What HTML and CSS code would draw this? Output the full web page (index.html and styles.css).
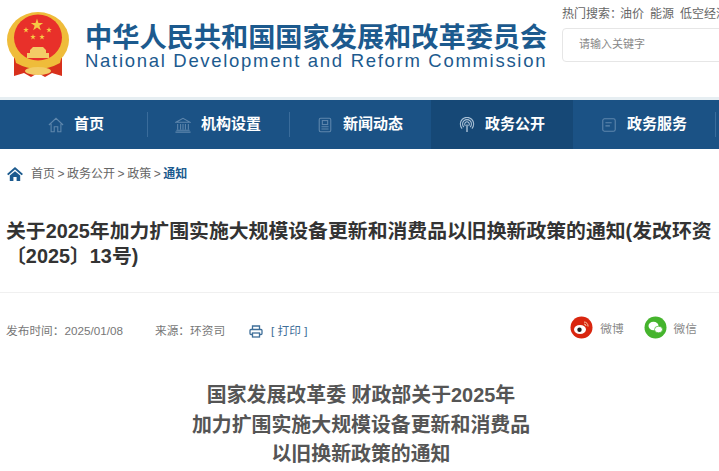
FILE: index.html

```html
<!DOCTYPE html>
<html lang="zh-CN">
<head>
    <meta charset="UTF-8">
    <title>关于2025年加力扩围实施大规模设备更新和消费品以旧换新政策的通知</title>
    <link rel="stylesheet" href="styles.css">
</head>
<body>
    <header class="top">
        <div class="brand">
            <svg class="emblem" width="64" height="68" viewBox="0 0 64 68">
                <defs>
                    <polygon id="star" points="0,-1 .225,-.31 .95,-.31 .36,.12 .59,.81 0,.38 -.59,.81 -.36,.12 -.95,-.31 -.225,-.31" fill="#f6c944"/>
                </defs>
                <path d="M8 46 L8 65 L18 62 L25 66 L32 62 L39 66 L46 62 L56 65 L56 46 Z" fill="#d8301c"/>
                <ellipse cx="32" cy="29" rx="31" ry="28" fill="#efbc3a"/>
                <ellipse cx="32" cy="26.5" rx="24" ry="23" fill="#e8302a"/>
                <use href="#star" transform="translate(31 14) scale(6.5)"/>
                <use href="#star" transform="translate(20 19) scale(3)"/>
                <use href="#star" transform="translate(43 19) scale(3)"/>
                <use href="#star" transform="translate(27 26) scale(3)"/>
                <use href="#star" transform="translate(36 26) scale(3)"/>
                <path d="M21 47 V42 H24 V39 L27 36 H37 L40 39 V42 H43 V47 Z" fill="#f3cc66"/>
                <path d="M8 44 Q32 58 56 44 L54 52 Q32 64 10 52 Z" fill="#efbc3a"/>
                <ellipse cx="32" cy="60" rx="13" ry="4" fill="#f3cc66"/>
            </svg>
            <div class="brand-text">
                <div class="brand-cn">中华人民共和国国家发展和改革委员会</div>
                <div class="brand-en">National Development and Reform Commission</div>
            </div>
        </div>
        <div class="search">
            <div class="hot">
                <span>热门搜索：</span><span>油价</span><span>能源</span><span>低空经济</span>
            </div>
            <div class="search-box">请输入关键字</div>
        </div>
    </header>

    <nav class="nav">
        <a class="nav-item" href="#">
            <svg class="nav-icon" viewBox="0 0 18 18" fill="none" stroke="#5f87ad" stroke-width="1.2"><path d="M1 9 L9 1.5 L17 9 M3.5 7.5 V16.5 H7 V11 H11 V16.5 H14.5 V7.5"/></svg>
            <span class="nav-text">首页</span>
        </a>
        <a class="nav-item" href="#">
            <svg class="nav-icon" viewBox="0 0 18 18" fill="none" stroke="#5f87ad" stroke-width="1.2"><path d="M1 6 L9 1.5 L17 6 Z M3 8 V14 M6.3 8 V14 M9 8 V14 M11.7 8 V14 M15 8 V14 M1.5 15 H16.5 M.5 17 H17.5"/></svg>
            <span class="nav-text">机构设置</span>
        </a>
        <a class="nav-item" href="#">
            <svg class="nav-icon" viewBox="0 0 18 18" fill="none" stroke="#5f87ad" stroke-width="1.2"><rect x="2.5" y="1.5" width="13" height="15" rx="1.5"/><rect x="6" y="4" width="6" height="4.5"/><path d="M5 11 H13 M5 13.5 H13"/></svg>
            <span class="nav-text">新闻动态</span>
        </a>
        <a class="nav-item active" href="#">
            <svg class="nav-icon" viewBox="0 0 18 18" fill="none" stroke="#a9c0d6" stroke-width="1.2"><path d="M3.5 13 A7.5 7.5 0 1 1 14.5 13 M5.5 11.5 A5 5 0 1 1 12.5 11.5 M7.3 10 A2.6 2.6 0 1 1 10.7 10"/><path d="M9 8.5 V17" stroke-width="1.6"/></svg>
            <span class="nav-text">政务公开</span>
        </a>
        <a class="nav-item" href="#">
            <svg class="nav-icon" viewBox="0 0 18 18" fill="none" stroke="#5f87ad" stroke-width="1.2"><rect x="2" y="2" width="14" height="14" rx="2"/><path d="M5 6.5 H12 M5 10 H10"/></svg>
            <span class="nav-text">政务服务</span>
        </a>
    </nav>

    <div class="crumbs">
        <svg class="crumb-home" width="16" height="14" viewBox="0 0 16 14"><path d="M8 0 L16 7 L14.6 8.2 L8 2.6 L1.4 8.2 L0 7 Z M2.8 8.6 L8 4.2 L13.2 8.6 V14 H9.6 V10 H6.4 V14 H2.8 Z" fill="#1c5a8e"/></svg>
        <span class="crumb-text">首页 &gt; 政务公开 &gt; 政策 &gt; <b>通知</b></span>
    </div>

    <h1 class="title">关于2025年加力扩围实施大规模设备更新和消费品以旧换新政策的通知(发改环资〔2025〕13号)</h1>

    <div class="meta">
        <div class="meta-left">
            <span class="date">发布时间：2025/01/08</span>
            <span class="source">来源：环资司</span>
            <span class="print">
                <svg class="print-icon" width="14" height="13" viewBox="0 0 14 13" fill="none" stroke="#3f6f99" stroke-width="1.3"><path d="M3.5 4.5 V1 H10.5 V4.5"/><rect x="1" y="4.5" width="12" height="5" rx="1"/><rect x="3.5" y="8" width="7" height="4" fill="#fff"/></svg>
                [ 打印 ]
            </span>
        </div>
        <div class="share">
            <span class="share-item">
                <svg width="23" height="23" viewBox="0 0 23 23"><circle cx="11.5" cy="11.5" r="11" fill="#d9260f"/><ellipse cx="10" cy="13.5" rx="6" ry="4.5" fill="#fff"/><circle cx="9.5" cy="13.8" r="2.2" fill="#222"/><path d="M14 6 A4 4 0 0 1 18 10.5 M14 8 A2 2 0 0 1 16 10" fill="none" stroke="#f7c9a8" stroke-width="1"/></svg>
                微博
            </span>
            <span class="share-item">
                <svg width="23" height="23" viewBox="0 0 23 23"><circle cx="11.5" cy="11.5" r="11" fill="#45b42d"/><ellipse cx="9.5" cy="10" rx="5" ry="4.2" fill="#fff"/><ellipse cx="14.5" cy="13.5" rx="4" ry="3.3" fill="#fff" stroke="#45b42d" stroke-width=".7"/></svg>
                微信
            </span>
        </div>
    </div>

    <h2 class="doc-title">国家发展改革委 财政部关于2025年<br>加力扩围实施大规模设备更新和消费品<br>以旧换新政策的通知</h2>
</body>
</html>
```

FILE: styles.css

```css
html, body {
    height: 471px;
    overflow: hidden;
}
body {
    margin: 0;
    font-family: "Liberation Sans", "Noto Sans CJK SC", sans-serif;
    color: #666;
    background: #fff;
}
.top {
    display: flex;
    justify-content: space-between;
    height: 97px;
    border-bottom: 3px solid #e6eef2;
}
.brand {
    display: flex;
    padding: 11px 0 0 6px;
}
.emblem {
    flex-shrink: 0;
}
.brand-text {
    margin-left: 15px;
    padding-top: 12px;
}
.brand-cn {
    font-size: 27.2px;
    line-height: 29px;
    font-weight: bold;
    color: #1c5a8e;
    white-space: nowrap;
}
.brand-en {
    font-size: 18.5px;
    line-height: 18px;
    letter-spacing: 1.7px;
    color: #1c5a8e;
    white-space: nowrap;
}
.search {
    width: 157px;
    flex-shrink: 0;
    padding-top: 7px;
    overflow: hidden;
}
.hot {
    font-size: 12px;
    line-height: 15px;
    white-space: nowrap;
}
.hot span {
    margin-right: 6px;
}
.hot span:first-child {
    margin-right: -2px;
}
.search-box {
    margin-top: 6px;
    height: 32px;
    line-height: 30px;
    padding-left: 16px;
    width: 200px;
    border: 1px solid #e6e6e6;
    border-radius: 4px;
    font-size: 11px;
    color: #888;
}
.nav {
    display: flex;
    height: 49px;
    padding-left: 5px;
    background: #1b5285;
}
.nav-item {
    display: flex;
    align-items: center;
    justify-content: center;
    gap: 10px;
    width: 142px;
    color: #fff;
    font-size: 15px;
    font-weight: bold;
    text-decoration: none;
    position: relative;
}
.nav-item::after {
    content: "";
    position: absolute;
    right: -1px;
    top: 12px;
    height: 25px;
    width: 1px;
    background: #3a6c9b;
}
.nav-item.active {
    background: #164876;
}
.nav-item.active::after {
    display: none;
}
.nav-icon {
    width: 16px;
    height: 16px;
}
.nav-text {
    padding-bottom: 4px;
}
.crumbs {
    display: flex;
    align-items: center;
    gap: 8px;
    padding: 18px 0 0 7px;
    font-size: 12px;
    line-height: 14px;
}
.crumb-text {
    word-spacing: -0.8px;
}
.crumbs b {
    color: #1c5a8e;
}
.title {
    margin: 38px 0 0;
    padding: 0 6px;
    font-size: 19.85px;
    line-height: 25px;
    font-weight: bold;
    color: #333;
}
.meta {
    display: flex;
    justify-content: space-between;
    align-items: center;
    margin-top: 23px;
    padding: 0 22px 0 6px;
    height: 72px;
    border-top: 1px solid #f0f0f0;
    font-size: 11.7px;
}
.meta-left {
    display: flex;
    align-items: center;
    color: #777;
}
.source {
    margin-left: 32px;
}
.print {
    display: flex;
    align-items: center;
    gap: 8px;
    margin-left: 24px;
    padding-top: 1px;
    color: #3f6f99;
}
.print-icon {
    margin-top: 4px;
}
.share {
    display: flex;
    gap: 20px;
    padding-bottom: 4px;
}
.share-item {
    display: flex;
    align-items: center;
    gap: 7px;
    color: #888;
}
.doc-title {
    margin: 16px 0 0;
    padding-left: 3px;
    text-align: center;
    font-size: 19.9px;
    line-height: 29.5px;
    font-weight: bold;
    color: #555;
}
```
